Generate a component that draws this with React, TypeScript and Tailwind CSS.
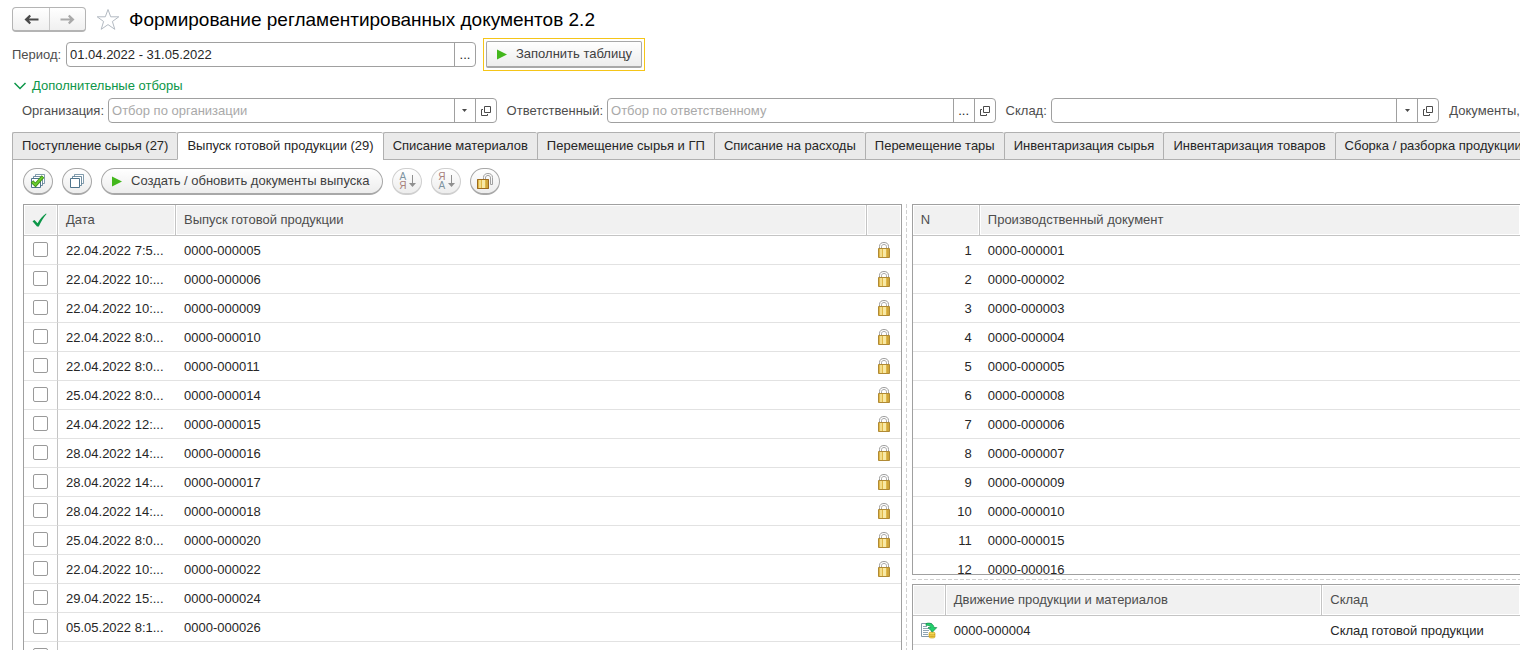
import { ReactNode } from "react";

const tabs = [
  "Поступление сырья (27)",
  "Выпуск готовой продукции (29)",
  "Списание материалов",
  "Перемещение сырья и ГП",
  "Списание на расходы",
  "Перемещение тары",
  "Инвентаризация сырья",
  "Инвентаризация товаров",
  "Сборка / разборка продукции",
];

const releases = [
  { date: "22.04.2022 7:5...", num: "0000-000005", locked: true },
  { date: "22.04.2022 10:...", num: "0000-000006", locked: true },
  { date: "22.04.2022 10:...", num: "0000-000009", locked: true },
  { date: "22.04.2022 8:0...", num: "0000-000010", locked: true },
  { date: "22.04.2022 8:0...", num: "0000-000011", locked: true },
  { date: "25.04.2022 8:0...", num: "0000-000014", locked: true },
  { date: "24.04.2022 12:...", num: "0000-000015", locked: true },
  { date: "28.04.2022 14:...", num: "0000-000016", locked: true },
  { date: "28.04.2022 14:...", num: "0000-000017", locked: true },
  { date: "28.04.2022 14:...", num: "0000-000018", locked: true },
  { date: "25.04.2022 8:0...", num: "0000-000020", locked: true },
  { date: "22.04.2022 10:...", num: "0000-000022", locked: true },
  { date: "29.04.2022 15:...", num: "0000-000024", locked: false },
  { date: "05.05.2022 8:1...", num: "0000-000026", locked: false },
  { date: "", num: "", locked: false },
];

const documents = [
  "0000-000001",
  "0000-000002",
  "0000-000003",
  "0000-000004",
  "0000-000005",
  "0000-000008",
  "0000-000006",
  "0000-000007",
  "0000-000009",
  "0000-000010",
  "0000-000015",
  "0000-000016",
];

const th =
  "h-[31px] border-b border-[#c4c4c4] bg-[#f1f1f1] px-2 text-left font-normal text-[#4d4d4d] shadow-[inset_0_0_0_1px_#ffffff]";
const cell = "h-[29px] border-b border-[#e2e2e2]";
const td = `${cell} px-2 pt-[2px] whitespace-nowrap`;

function ArrowIcon({ className }: { className: string }) {
  return (
    <svg width="15" height="11" viewBox="0 0 15 11" className={className} fill="currentColor">
      <path d="M0.5 5.5L5.5 0.8L7 2.2L5 4.5H14.5V6.5H5L7 8.8L5.5 10.2Z" />
    </svg>
  );
}

function PlayIcon() {
  return (
    <svg width="10" height="11" viewBox="0 0 10 11">
      <path d="M0 0.5L10 5.5L0 10.5Z" fill="#43b71c" />
    </svg>
  );
}

function OpenIcon() {
  return (
    <svg width="10" height="10" viewBox="0 0 10 10" fill="none" stroke="#4a4a4a">
      <path d="M3.5 0.5H9.5V6.5H3.5Z" />
      <path d="M2 3.5H0.5V9.5H6.5V8" />
    </svg>
  );
}

function LockBody() {
  return (
    <>
      <path d="M1.5 6.5H12.5V15.5H1.5Z" fill="#e0b848" stroke="#b08a35" />
      <path d="M3 7H5V15H3Z" fill="#f3dd8c" />
      <path d="M6 7H9V15H6Z" fill="#f8e9a6" />
      <path d="M10 7H12V15H10Z" fill="#cfa63c" />
    </>
  );
}

function LockIcon() {
  return (
    <svg width="14" height="16" viewBox="0 0 14 16" fill="none" className="mx-auto">
      <path d="M2.5 6.5V4.5C2.5 1.8 4.3 0.5 7 0.5S11.5 1.8 11.5 4.5V6.5" stroke="#9c9c9c" />
      <path d="M4.5 6.5V4.8C4.5 3.2 5.5 2.5 7 2.5S9.5 3.2 9.5 4.8V6.5" stroke="#ababab" />
      <LockBody />
    </svg>
  );
}

function UnlockIcon() {
  return (
    <svg width="18" height="17" viewBox="0 0 18 17" fill="none">
      <path d="M7.5 6V4.5C7.5 2 9.2 0.5 12 0.5S16.5 2 16.5 4.5V11.5H14.5V5C14.5 3.3 13.6 2.5 12 2.5S9.5 3.3 9.5 5V6" stroke="#a0a0a0" />
      <LockBody />
      <path d="M1.5 6.5H12.5V15.5H1.5Z" stroke="#9c6a1e" />
    </svg>
  );
}

function SheetsIcon({ checked }: { checked?: boolean }) {
  return (
    <svg width="16" height="16" viewBox="0 0 16 16" fill="#fff" stroke="#4f748c">
      <path d="M5.5 1.5H14.5V10.5H5.5Z" strokeOpacity="0.7" />
      <path d="M3.5 3.5H12.5V12.5H3.5Z" strokeOpacity="0.8" />
      <path d="M1.5 5.5H10.5V14.5H1.5Z" />
      {checked && <path d="M2 8.5L5.5 12L13 3.5" fill="none" stroke="#3f8f1c" strokeWidth="3.5" />}
      {checked && <path d="M2.5 9L5.5 11.8L12.6 3.8" fill="none" stroke="#6ccf2c" strokeWidth="1.8" />}
    </svg>
  );
}

function SortIcon({ desc }: { desc?: boolean }) {
  return (
    <span className="flex items-center gap-[2px]">
      <span className="flex flex-col text-[10px] leading-[9px]">
        <span className={desc ? "text-[#a8817c]" : "text-[#7d93a0]"}>{desc ? "Я" : "А"}</span>
        <span className={desc ? "text-[#7d93a0]" : "text-[#a8817c]"}>{desc ? "А" : "Я"}</span>
      </span>
      <svg width="7" height="14" viewBox="0 0 7 14" fill="#8f8f8f">
        <path d="M3 1H4V9H7L3.5 13L0 9H3Z" />
      </svg>
    </span>
  );
}

function MoveIcon() {
  return (
    <svg width="17" height="17" viewBox="0 0 17 17" fill="none">
      <path d="M0.5 1.5H10.5V14.5H0.5Z" fill="#fff" stroke="#8399a9" />
      <path d="M2 4.5H6M2 6.5H8M2 8.5H8M2 10.5H7M2 12.5H7" stroke="#8fa5b4" />
      <path d="M8 11C8 9.8 14 9.8 14 11V15C14 16.4 8 16.4 8 15Z" fill="#f6d858" stroke="#c99a1a" strokeWidth="0.6" />
      <path d="M8 12.3C9 13.2 13 13.2 14 12.3M8 14C9 14.8 13 14.8 14 14" stroke="#c99a1a" strokeWidth="0.8" />
      <path d="M5 1.6C9 0.2 12.6 2 13 5.6H15.8L11.5 10L7 5.6H9.6C9.4 4 7.8 3 5 3.4Z" fill="#22d06c" stroke="#128a48" strokeWidth="0.7" />
    </svg>
  );
}

function RoundButton({ label, faded, children }: { label: string; faded?: boolean; children: ReactNode }) {
  return (
    <button
      aria-label={label}
      disabled={faded}
      className="flex h-[27px] w-[30px] items-center justify-center rounded-full border border-b-2 border-[#a8a8a8] bg-linear-to-b from-white to-[#ededed] disabled:border-[#cfcfcf]"
    >
      {children}
    </button>
  );
}

type FieldProps = {
  id: string;
  label: string;
  placeholder?: string;
  picker: "list" | "dots";
};

// label and box sit directly in the filter row, so all boxes get the same width
function FilterField({ id, label, placeholder, picker }: FieldProps) {
  return (
    <>
      <label htmlFor={id} className="mr-1 ml-[10px] shrink-0 text-[#4d4d4d]">
        {label}
      </label>
      <div className="flex h-[25px] min-w-0 flex-1 rounded border border-[#a0a0a0]">
        <input id={id} placeholder={placeholder} className="min-w-0 flex-1 px-[3px] outline-none placeholder:text-[#a9a9a9]" />
        <button aria-label="Выбрать" className="flex w-[21px] items-center justify-center border-l border-[#a0a0a0]">
          {picker === "dots" ? (
            "..."
          ) : (
            <svg width="5" height="3" viewBox="0 0 5 3">
              <path d="M0 0H5L2.5 3Z" fill="#4a4a4a" />
            </svg>
          )}
        </button>
        <button aria-label="Открыть" className="flex w-[21px] items-center justify-center border-l border-[#a0a0a0]">
          <OpenIcon />
        </button>
      </div>
    </>
  );
}

export default function App() {
  return (
    <div className="flex h-screen flex-col overflow-hidden bg-white font-['Liberation_Sans',Arial,sans-serif] text-[13px] leading-4 text-[#262626]">
      <header className="flex items-center px-3 pt-[7px]">
        <div className="flex h-[25px] rounded-sm border border-b-2 border-[#b4b4b4] bg-linear-to-b from-white to-[#f0f0f0]">
          <button aria-label="Назад" className="flex w-9 items-center justify-center">
            <ArrowIcon className="text-[#4a4a4a]" />
          </button>
          <button aria-label="Вперед" className="flex w-9 items-center justify-center border-l border-[#c8c8c8]">
            <ArrowIcon className="rotate-180 text-[#a9a9a9]" />
          </button>
        </div>
        <button aria-label="Добавить в избранное" className="ml-[10px]">
          <svg width="24" height="23" viewBox="0 0 24 23" fill="none" stroke="#b3bac2">
            <path d="M12 1.5L14.7 8.8H22.8L16.4 13.5L18.8 21.3L12 16.6L5.2 21.3L7.6 13.5L1.2 8.8H9.3Z" />
          </svg>
        </button>
        <h1 className="ml-[9px] text-[19px] leading-6 whitespace-nowrap text-black">
          Формирование регламентированных документов 2.2
        </h1>
      </header>

      <div className="flex items-center px-3 pt-[6px]">
        <label htmlFor="period" className="w-[54px] text-[#4d4d4d]">
          Период:
        </label>
        <div className="flex h-[25px] w-[410px] rounded border border-[#a0a0a0]">
          <input id="period" defaultValue="01.04.2022 - 31.05.2022" className="min-w-0 flex-1 px-[3px] outline-none" />
          <button aria-label="Выбрать период" className="w-[21px] border-l border-[#a0a0a0]">
            ...
          </button>
        </div>
        <div className="ml-[7px] border border-[#f5c518] p-[2px]">
          <button className="flex h-[27px] items-center gap-[9px] rounded-xs border border-b-2 border-[#a8a8a8] bg-linear-to-b from-white to-[#ededed] pr-[9px] pl-[10px] text-[#404040]">
            <PlayIcon />
            Заполнить таблицу
          </button>
        </div>
      </div>

      <button className="flex items-center gap-[6px] self-start px-[14px] pt-[7px] text-[#0c9648]">
        <svg width="12" height="8" viewBox="0 0 12 8" fill="none" stroke="currentColor" strokeWidth="1.5">
          <path d="M0.5 1L6 6.5L11.5 1" />
        </svg>
        Дополнительные отборы
      </button>

      <div className="flex items-center pt-1 pl-3">
        <FilterField id="org" label="Организация:" placeholder="Отбор по организации" picker="list" />
        <FilterField id="person" label="Ответственный:" placeholder="Отбор по ответственному" picker="dots" />
        <FilterField id="store" label="Склад:" picker="list" />
        <span className="ml-[10px] shrink-0 text-[#4d4d4d]">Документы,</span>
      </div>

      <div className="ml-3 flex min-h-0 flex-1 flex-col pt-[9px]">
        <nav role="tablist" className="flex h-7 shrink-0">
          {tabs.map((tab, i) => (
            <button
              key={tab}
              role="tab"
              aria-selected={i === 1}
              className="shrink-0 rounded-t-xs border-t border-b border-l border-[#b0b0b0] bg-[#eaeaea] px-[9px] whitespace-nowrap aria-selected:border-b-white aria-selected:bg-white"
            >
              {tab}
            </button>
          ))}
        </nav>

        <section className="flex min-h-0 flex-1 flex-col border-l border-[#b0b0b0] pl-[10px]">
          <div className="flex shrink-0 items-center gap-[9px] pt-2 pb-[9px]">
            <RoundButton label="Отметить все">
              <SheetsIcon checked />
            </RoundButton>
            <RoundButton label="Снять отметки">
              <SheetsIcon />
            </RoundButton>
            <button className="flex h-[27px] items-center gap-[9px] rounded-full border border-b-2 border-[#a8a8a8] bg-linear-to-b from-white to-[#ededed] pr-[13px] pl-[10px] text-[#404040]">
              <PlayIcon />
              Создать / обновить документы выпуска
            </button>
            <RoundButton label="По возрастанию" faded>
              <SortIcon />
            </RoundButton>
            <RoundButton label="По убыванию" faded>
              <SortIcon desc />
            </RoundButton>
            <RoundButton label="Разблокировать">
              <UnlockIcon />
            </RoundButton>
          </div>

          <div className="flex min-h-0 flex-1">
            <div className="min-w-0 flex-[878] overflow-hidden border border-b-0 border-[#a0a0a0]">
              <table className="w-full table-fixed border-separate border-spacing-0">
                <thead>
                  <tr>
                    <th className={`${th} w-[34px] border-r`}>
                      <svg width="15" height="15" viewBox="0 0 15 15" fill="#0c9648" aria-label="Отметка">
                        <path d="M0.5 8.2L2.5 7L5.6 10.2C8 6.2 10.5 3 14 0.5L14.5 1C11.5 4.5 9 8.5 6.8 13.5H5Z" />
                      </svg>
                    </th>
                    <th className={`${th} w-[118px] border-r`}>Дата</th>
                    <th className={`${th} border-r`}>Выпуск готовой продукции</th>
                    <th className={`${th} w-[34px]`} />
                  </tr>
                </thead>
                <tbody>
                  {releases.map((row, i) => (
                    <tr key={i}>
                      <td className={`${cell} border-r border-r-[#c4c4c4] pb-[2px] pl-[9px]`}>
                        <input
                          type="checkbox"
                          aria-label={`Отметить ${row.num}`}
                          className="block size-[15px] appearance-none rounded-xs border border-[#9a9a9a] bg-white"
                        />
                      </td>
                      <td className={td}>{row.date}</td>
                      <td className={td}>{row.num}</td>
                      <td className={cell}>{row.locked && <LockIcon />}</td>
                    </tr>
                  ))}
                </tbody>
              </table>
            </div>

            <div className="mr-[5px] ml-1 w-px shrink-0 bg-[repeating-linear-gradient(to_bottom,#d0d0d0_0_4px,transparent_4px_6px)]" />

            <div className="flex min-w-0 flex-[609] flex-col">
              <div className="min-h-0 flex-1 overflow-hidden border border-r-0 border-[#a0a0a0]">
                <table className="w-full table-fixed border-separate border-spacing-0">
                  <thead>
                    <tr>
                      <th className={`${th} w-[67px] border-r`}>N</th>
                      <th className={th}>Производственный документ</th>
                    </tr>
                  </thead>
                  <tbody>
                    {documents.map((num, i) => (
                      <tr key={num}>
                        <td className={`${td} text-right`}>{i + 1}</td>
                        <td className={td}>{num}</td>
                      </tr>
                    ))}
                  </tbody>
                </table>
              </div>

              <div className="my-1 h-px shrink-0 bg-[repeating-linear-gradient(to_right,#d0d0d0_0_4px,transparent_4px_6px)]" />

              <div className="h-[66px] shrink-0 overflow-hidden border-t border-l border-[#a0a0a0]">
                <table className="w-full table-fixed border-separate border-spacing-0">
                  <thead>
                    <tr>
                      <th className={`${th} w-[33px] border-r`} />
                      <th className={`${th} w-[62%] border-r`}>Движение продукции и материалов</th>
                      <th className={th}>Склад</th>
                    </tr>
                  </thead>
                  <tbody>
                    <tr>
                      <td className={`${cell} pl-2`}>
                        <MoveIcon />
                      </td>
                      <td className={td}>0000-000004</td>
                      <td className={td}>Склад готовой продукции</td>
                    </tr>
                  </tbody>
                </table>
              </div>
            </div>
          </div>
        </section>
      </div>
    </div>
  );
}
